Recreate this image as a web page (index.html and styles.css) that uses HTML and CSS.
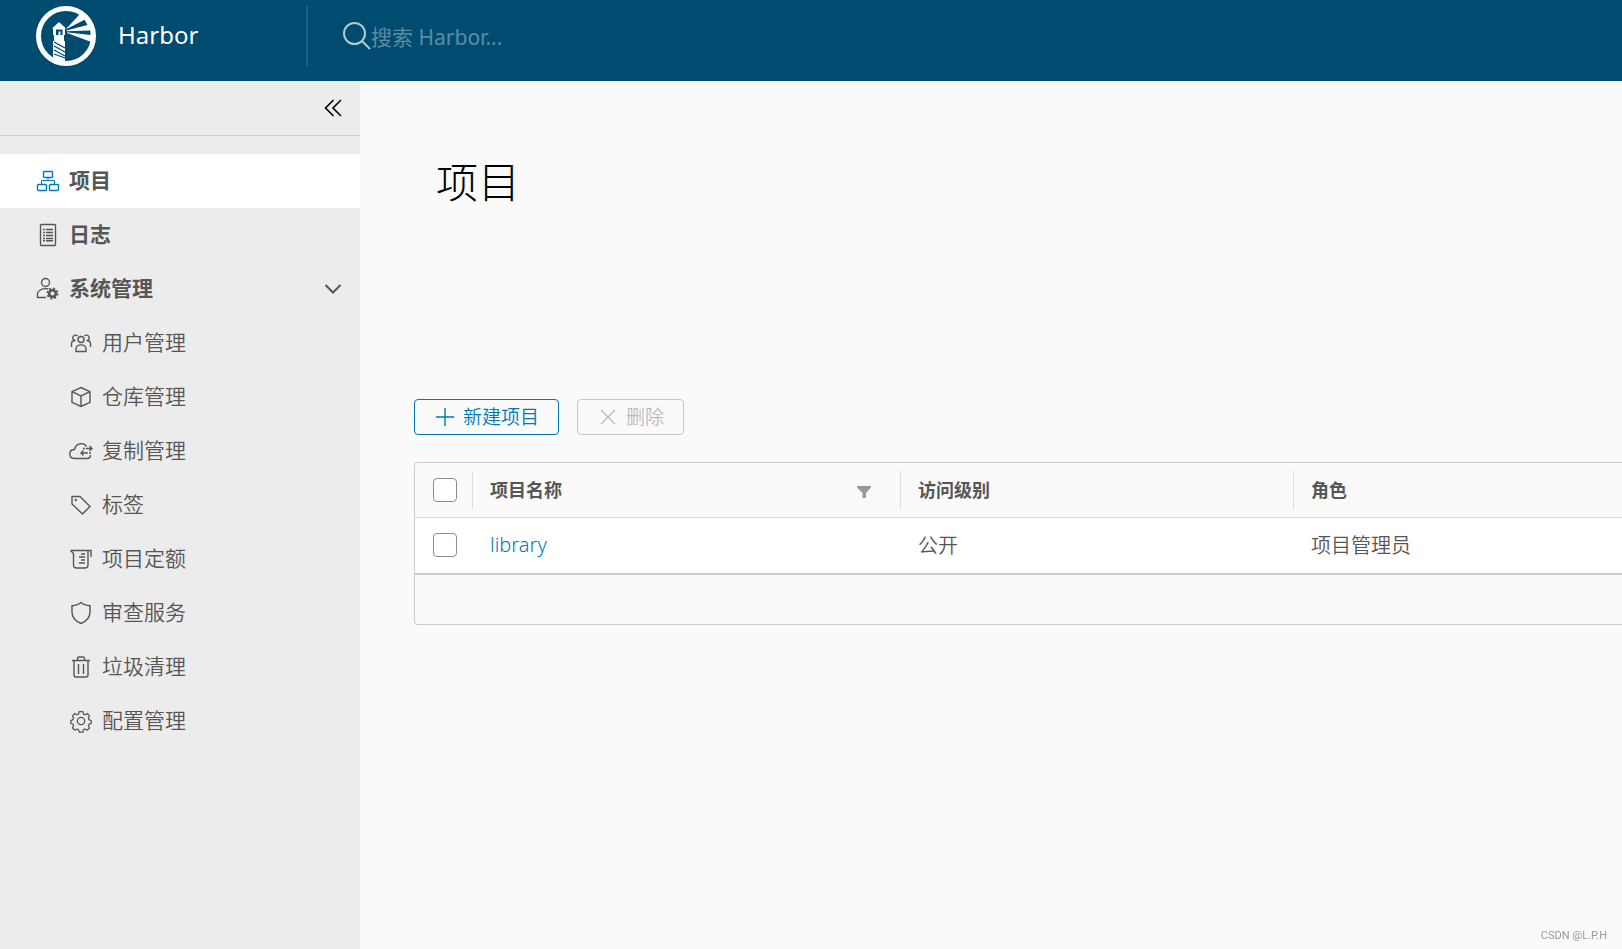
FILE: index.html
```html
<!DOCTYPE html>
<html lang="zh-CN">
<head>
<meta charset="utf-8">
<title>Harbor</title>
<link rel="stylesheet" href="styles.css">
</head>
<body>
<header class="header">
  <a class="brand" href="#">
    <svg class="logo" viewBox="0 0 60 60" aria-hidden="true">
      <defs><clipPath id="disc"><circle cx="30" cy="30" r="28"/></clipPath></defs>
      <g clip-path="url(#disc)" fill="#fff">
        <path d="M17 60V22.500h-1L23 16l7 6.500h-1V60z"/>
        <path d="M30.500 22.500 43 9l4-5 12 10v26L54 35.500 31 27z"/>
      </g>
      <path fill="#004b70" d="M30.500 23 48.500 13.800 51.500 19 30.500 24.600zM30.500 25.300 54.500 24.500V29L30.500 26.300zM20 23.500h6.500V29h-2v-3.500h-2V29H20zM17 29h1v6h-1zM28 29h1v6h-1z"/>
      <path stroke="#004b70" stroke-width="1.300" fill="none" d="m18 36 11 6M18 40l11 6M18 44l11 6M18 48l11 4"/>
      <circle cx="30" cy="30" r="27.500" fill="none" stroke="#fff" stroke-width="5"/>
    </svg>
    <span class="brand-name">Harbor</span>
  </a>
  <form class="search">
    <svg class="search-icon" viewBox="0 0 28 28" aria-hidden="true"><circle cx="11.500" cy="11.500" r="10.500"/><path d="m19.500 19.500 7.500 7.500"/></svg>
    <input type="text" aria-label="搜索 Harbor" placeholder="搜索 Harbor...">
  </form>
</header>
<div class="body">
  <nav class="sidebar">
    <div class="collapse"><button class="toggle" type="button" aria-label="收起"><svg class="icon" viewBox="0 0 24 24"><path stroke-width="1.600" d="m12.500 4-8 8 8 8M20 4l-8 8 8 8"/></svg></button></div>
    <a class="item active" href="#"><svg class="icon" viewBox="0 0 24 24"><rect x="7.500" y="2.500" width="9" height="6" rx="1"/><rect x="1.500" y="15.500" width="9" height="6" rx="1"/><rect x="13.500" y="15.500" width="9" height="6" rx="1"/><path stroke-width="1" d="M12 8.500v3M5.500 15v-3.500h13V15"/></svg><span class="label">项目</span></a>
    <a class="item" href="#"><svg class="icon" viewBox="0 0 24 24"><rect x="4.500" y="1.500" width="15" height="21" rx="1"/><path d="M7 6.500h2m1 0h7M7 9.500h2m1 0h7M7 12.500h2m1 0h7M7 15.500h2m1 0h7M7 17.800h2m1 0h7"/></svg><span class="label">日志</span></a>
    <button class="item group" type="button" aria-expanded="true"><svg class="icon" viewBox="0 0 24 24"><circle cx="9.500" cy="5.500" r="4"/><path d="M10 20.500H1.500V16c2-3.500 6-5 11-4"/><circle cx="16.500" cy="16.500" r="3.300" stroke-width="2.600"/><circle cx="16.500" cy="16.500" r="5" stroke-width="2" stroke-dasharray="1.960 1.960"/></svg><span class="label">系统管理</span><svg class="icon caret" viewBox="0 0 24 24"><path stroke-width="2" d="m4.500 8 7.500 7.500L19.500 8"/></svg></button>
    <a class="item sub" href="#"><svg class="icon" viewBox="0 0 24 24"><circle cx="12" cy="8.500" r="3"/><path d="M7 20.500V18c0-5.500 10-5.500 10 0v2.500zM8.500 5A2.700 2.700 0 1 0 6.500 9.500C3.500 9.500 2.500 11 2.500 13v3M15.500 5a2.700 2.700 0 1 1 2 4.500c3 0 4 1.500 4 3.500v3"/></svg><span class="label">用户管理</span></a>
    <a class="item sub" href="#"><svg class="icon" viewBox="0 0 24 24"><path d="m12 2.500 9 4.200v10.600l-9 4.200-9-4.200V6.700zM3 6.700l9 4.300 9-4.300M12 11v10.500"/></svg><span class="label">仓库管理</span></a>
    <a class="item sub" href="#"><svg class="icon" viewBox="0 0 24 24"><path d="M17.500 7.500C15.500 3.500 7 3 5.500 10.500 2 10.500.8 12.500.8 15c0 3 2 4.500 4.700 4.500H18c2 0 3.500-1 3.500-3.500"/><path d="M14 9.500h2m1 0h6m-2.500-2.500L23 9.500 20.500 12M22 14h-2m-1 0h-7m2.500-2.500L12 14l2.500 2.500"/></svg><span class="label">复制管理</span></a>
    <a class="item sub" href="#"><svg class="icon" viewBox="0 0 24 24"><path d="M3 3.500h8l10 10-7.500 7.500L3 11z"/><circle cx="6.800" cy="7" r=".5"/></svg><span class="label">标签</span></a>
    <a class="item sub" href="#"><svg class="icon" viewBox="0 0 24 24"><path d="M1.500 3.500h20.500v6.500M1.500 3.500l3 3V18c0 2 1 3 3 3H16c2 0 3-1 3-3V3.500M12 7h4m-6 3h6m-4 3h4m-6 3h6"/></svg><span class="label">项目定额</span></a>
    <a class="item sub" href="#"><svg class="icon" viewBox="0 0 24 24"><path d="M12 1.500c2.500 2.300 5.500 3 9 3.200V11c0 6-4 9.500-9 11.500-5-2-9-5.500-9-11.500V4.700c3.500-.2 6.500-.9 9-3.200z"/></svg><span class="label">审查服务</span></a>
    <a class="item sub" href="#"><svg class="icon" viewBox="0 0 24 24"><path d="M3 5.500h18M5 5.500V20c0 1.500.5 2 2 2h10c1.500 0 2-.500 2-2V5.500M9.500 9v10M14.500 9v10M8.500 5V3.500c0-1 .5-1.500 1.500-1.500h4c1 0 1.500.5 1.500 1.500V5"/></svg><span class="label">垃圾清理</span></a>
    <a class="item sub" href="#"><svg class="icon" viewBox="-1 -1 26 26"><circle cx="12" cy="12" r="4"/><path stroke-linejoin="round" d="M10 1.800h4l.7 2.700 1.600.7 2.500-1.300 2.400 2.600-1.100 2.500.6 1.600 2.300.9v3l-2.300.9-.6 1.600 1.100 2.500-2.400 2.400-2.500-1.200-1.600.7-.7 2.600h-4l-.7-2.600-1.600-.7-2.500 1.200-2.400-2.400 1.100-2.500-.6-1.600-2.300-.9v-3l2.300-.9.6-1.600-1.100-2.500 2.400-2.600 2.500 1.300 1.600-.7z"/></svg><span class="label">配置管理</span></a>
  </nav>
  <main class="content">
    <h1 class="title">项目</h1>
    <div class="actions">
      <button class="btn primary" type="button"><svg class="btn-icon" viewBox="0 0 18 18"><path d="M9 0v18M0 9h18"/></svg>新建项目</button>
      <button class="btn" type="button" disabled><svg class="btn-icon" viewBox="0 0 18 18"><path d="m2 2 14 14M16 2 2 16"/></svg>删除</button>
    </div>
    <div class="datagrid">
      <table class="grid">
        <colgroup><col class="col-check"><col class="col-name"><col class="col-access"><col></colgroup>
        <thead>
          <tr>
            <th><input class="check" type="checkbox" aria-label="全选"></th>
            <th><div class="head"><span class="label">项目名称</span><button class="filter" type="button" aria-label="筛选"><svg viewBox="0 0 14 12"><path d="M0 0h14v1.500L9 7v5H5.500V7L0 1.500z"/></svg></button></div></th>
            <th><div class="head"><span class="label">访问级别</span></div></th>
            <th><div class="head"><span class="label">角色</span></div></th>
          </tr>
        </thead>
        <tbody>
          <tr>
            <td><input class="check" type="checkbox" aria-label="选择 library"></td>
            <td><a class="link" href="#">library</a></td>
            <td>公开</td>
            <td>项目管理员</td>
          </tr>
        </tbody>
      </table>
      <div class="grid-footer"></div>
    </div>
  </main>
</div>
<div class="watermark">CSDN @L.P.H</div>
</body>
</html>
```

FILE: styles.css
```css
* { box-sizing: border-box; }
body {
  margin: 0;
  min-height: 100vh;
  display: flex;
  flex-direction: column;
  background: #fafafa;
  color: #565656;
  font-family: "Noto Sans", "Noto Sans CJK SC", sans-serif;
  font-size: 20px;
  font-weight: 350;
}
button, input { font: inherit; color: inherit; }
a { text-decoration: none; color: inherit; }

.header {
  display: flex;
  height: 81px;
  padding-top: 6px;
  background: #004b70;
}
.brand {
  display: flex;
  align-items: center;
  gap: 22px;
  width: 306px;
  height: 60px;
  padding-left: 36px;
  color: #fff;
  font-size: 24px;
  font-weight: 400;
}
.brand-name { padding-bottom: 4px; }
.logo { width: 60px; height: 60px; }
.search {
  flex: 1;
  display: flex;
  align-items: center;
  height: 60px;
  padding-left: 35px;
  border-left: 2px solid #1f6080;
}
.search-icon {
  width: 28px;
  height: 28px;
  fill: none;
  stroke: #b3c9d4;
  stroke-width: 2;
}
.search input {
  flex: 1;
  padding: 2px 0 0;
  border: 0;
  outline: 0;
  background: none;
  color: #fff;
  font-size: 21px;
  font-weight: 400;
}
.search input::placeholder { color: #5c8ca4; opacity: 1; }

.body { flex: 1; display: flex; }
.sidebar {
  width: 360px;
  flex: none;
  background: #ececec;
}
.collapse {
  display: flex;
  align-items: center;
  justify-content: flex-end;
  height: 55px;
  margin-bottom: 18px;
  padding-right: 15px;
  border-bottom: 1px solid #ccc;
}
.toggle {
  display: flex;
  padding: 0;
  border: 0;
  background: none;
  color: #000;
}
.icon {
  width: 24px;
  height: 24px;
  flex: none;
  fill: none;
  stroke: currentColor;
  stroke-width: 1.4;
}
.item {
  display: flex;
  align-items: center;
  gap: 9px;
  width: 100%;
  height: 54px;
  padding: 0 15px 0 36px;
  border: 0;
  background: none;
  font-size: 21px;
  font-weight: 700;
  line-height: 30px;
  text-align: left;
}
.label { padding-bottom: 2px; }
.active { background: #fff; }
.active .icon { color: #0079b8; }
.caret { margin-left: auto; }
.sub { padding-left: 69px; font-weight: 350; }

.content {
  flex: 1;
  min-width: 0;
  padding: 71px 0 0 54px;
}
.title {
  margin: 0 0 187px;
  padding-left: 22px;
  color: #000;
  font-size: 42px;
  font-weight: 300;
  line-height: 60px;
}
.actions { display: flex; gap: 18px; margin-bottom: 27px; }
.btn {
  display: flex;
  align-items: center;
  gap: 9px;
  height: 36px;
  padding: 0 19px 0 21px;
  border: 1px solid #c8c8c8;
  border-radius: 4px;
  background: none;
  color: #bbb;
  font-size: 19px;
  line-height: 34px;
}
.primary { border-color: #0079b8; color: #0079b8; }
.btn-icon {
  width: 18px;
  height: 18px;
  fill: none;
  stroke: currentColor;
  stroke-width: 1.4;
}

.datagrid {
  border: 1px solid #ccc;
  border-right: 0;
  border-radius: 4px 0 0 4px;
}
.grid {
  width: 100%;
  table-layout: fixed;
  border-collapse: separate;
  border-spacing: 0;
}
.col-check { width: 57px; }
.col-name { width: 428px; }
.col-access { width: 393px; }
.grid th, .grid td {
  height: 55px;
  padding: 0 0 2px 18px;
  text-align: left;
}
.grid th {
  padding: 0;
  border-bottom: 1px solid #ddd;
  font-size: 18px;
  font-weight: 700;
}
.grid th:first-child { padding-left: 18px; }
.grid td { background: #fff; }
.head {
  display: flex;
  align-items: center;
  justify-content: space-between;
  height: 38px;
  padding: 0 29px 0 17px;
  border-left: 1px solid #ddd;
}
.filter {
  display: flex;
  padding: 4px 0 0;
  border: 0;
  background: none;
}
.filter svg { width: 14px; height: 12px; fill: #999; }
.check {
  appearance: none;
  display: block;
  width: 24px;
  height: 24px;
  margin: 0;
  border: 1px solid #8c8c8c;
  border-radius: 4px;
  background: #fff;
}
.link { color: #0079b8; }
.grid-footer { height: 51px; border-top: 2px solid #ccc; }

.watermark {
  position: fixed;
  right: 15px;
  bottom: 7px;
  color: #999;
  font-family: Roboto, sans-serif;
  font-size: 11px;
  font-weight: 400;
}
```
